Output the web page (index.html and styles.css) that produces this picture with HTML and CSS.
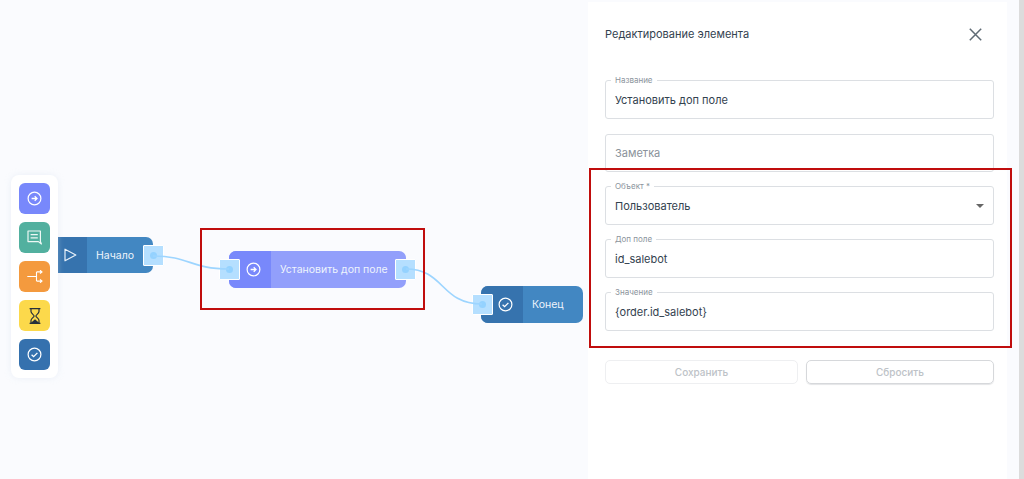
FILE: index.html
```html
<!DOCTYPE html>
<html lang="ru">
<head>
<meta charset="utf-8">
<title>Редактирование элемента</title>
<link rel="stylesheet" href="styles.css">
</head>
<body>
<div class="app">
  <main class="canvas">
    <div class="node node-blue node-start">
      <span class="node-icon"><svg width="13" height="14" viewBox="0 0 13 14" fill="none" stroke="#e8f1fa" stroke-width="1.2" stroke-linejoin="round"><path d="M1 1.200 11.800 7 1 12.800Z"/></svg></span>
      <span class="node-label">Начало</span>
    </div>
    <div class="node node-violet node-set">
      <span class="node-icon"><svg width="15" height="15" viewBox="0 0 15 15" fill="none" stroke="#fff" stroke-width="1.2"><circle cx="7.5" cy="7.5" r="6.4"/><path d="M4.6 7.5h5.2M7.700 5.300l2.300 2.200-2.300 2.200" stroke-width="1.3"/></svg></span>
      <span class="node-label">Установить доп поле</span>
    </div>
    <div class="node node-blue node-end">
      <span class="node-icon"><svg width="15" height="15" viewBox="0 0 15 15" fill="none" stroke="#fff" stroke-width="1.2"><circle cx="7.5" cy="7.5" r="6.4"/><path d="M4.6 7.8l2 1.900 3.800-3.800" stroke-width="1.3"/></svg></span>
      <span class="node-label">Конец</span>
    </div>

    <span class="port port-a"></span>
    <span class="port port-b"></span>
    <span class="port port-c"></span>
    <span class="port port-d"></span>

    <svg class="wires" width="588" height="479" viewBox="0 0 588 479" fill="none">
      <path d="M153 256C190 256 190 269 229 269"/>
      <path d="M406 269C445 269 440 304 482 304"/>
    </svg>

    <aside class="toolbar">
      <div class="tool tool-violet"><svg width="15" height="15" viewBox="0 0 15 15" fill="none" stroke="#fff" stroke-width="1.2"><circle cx="7.5" cy="7.5" r="6.4"/><path d="M4.6 7.5h5.200M7.700 5.300l2.300 2.200-2.300 2.200" stroke-width="1.3"/></svg></div>
      <div class="tool tool-green"><svg width="15" height="15" viewBox="0 0 15 15" fill="none" stroke="#eef8f5" stroke-width="1.2" stroke-linejoin="round"><path d="M1 1h12.400v10.600l1 2.400-3-2.400H1Z"/><path d="M3.600 4.600h7.200M3.600 7.800h7.200"/></svg></div>
      <div class="tool tool-orange"><svg width="16" height="13" viewBox="0 0 16 13" fill="none" stroke="#fff" stroke-width="1.1"><path d="M.3 6.500h9.200M9.500 1.900v9.200M9.500 1.900h5.500M9.500 11.100h5.500M13 .2l2 1.700-2 1.700M13 9.400l2 1.700-2 1.700"/></svg></div>
      <div class="tool tool-yellow"><svg width="12" height="16" viewBox="0 0 12 16" fill="none" stroke="#26303b" stroke-width="1.200"><path d="M.6.700h10.800M.6 15.300h10.800M2 .700v2.800c0 2.200 3.100 3.200 3.100 4.500S2 10.300 2 12.500v2.800M10 .700v2.800C10 5.700 6.900 6.700 6.900 8S10 10.300 10 12.500v2.800"/><path d="M3 14.700 6 12l3 2.700Z" fill="#26303b"/></svg></div>
      <div class="tool tool-blue"><svg width="15" height="15" viewBox="0 0 15 15" fill="none" stroke="#fff" stroke-width="1.2"><circle cx="7.500" cy="7.500" r="6.400"/><path d="M4.600 7.800l2 1.900 3.800-3.800" stroke-width="1.300"/></svg></div>
    </aside>
  </main>

  <section class="panel">
    <header class="panel-head">
      <h1 class="panel-title">Редактирование элемента</h1>
      <svg class="close" width="13" height="13" viewBox="0 0 13 13" fill="none" stroke="#5f6b75" stroke-width="1.500"><path d="M.8.800l11.400 11.400M12.200.800.800 12.200"/></svg>
    </header>
    <form class="form">
      <div class="field"><span class="field-label">Название</span><span class="field-value">Установить доп поле</span></div>
      <div class="field field-note"><span class="field-placeholder">Заметка</span></div>
      <div class="field field-select"><span class="field-label">Объект *</span><span class="field-value">Пользователь</span><span class="caret"></span></div>
      <div class="field field-extra"><span class="field-label">Доп поле</span><span class="field-value">id_salebot</span></div>
      <div class="field field-extra"><span class="field-label">Значение</span><span class="field-value">{order.id_salebot}</span></div>
      <div class="actions">
        <div class="btn btn-save">Сохранить</div>
        <div class="btn btn-reset">Сбросить</div>
      </div>
    </form>
  </section>
  <div class="gutter"></div>
  <div class="scrollbar"></div>

  <div class="mark mark-node"></div>
  <div class="mark mark-form"></div>
</div>
</body>
</html>
```
FILE: styles.css
```css
* { box-sizing: border-box; }
html, body { margin: 0; height: 479px; overflow: hidden; }
body { font-family: Inter, "Noto Sans", sans-serif; background: #fafbfe; color: #33424f; }

.app { position: relative; display: flex; width: 1024px; height: 479px; }
.canvas { position: relative; flex: 0 0 588px; height: 479px; background: #fafbfe; }
.wires { position: absolute; left: 0; top: 0; }
.wires path { stroke: #9dd5ff; stroke-width: 1.7; }

.node { position: absolute; display: flex; overflow: hidden; color: #eef4fc; font-size: 10.500px; font-weight: 400; border-radius: 7px; }
.node-icon { display: flex; align-items: center; justify-content: center; flex: none; height: 100%; }
.node-label { flex: 1; display: flex; align-items: center; }
.node-blue { background: #4287c2; }
.node-blue .node-icon { background: #3673ae; }
.node-violet { background: #929ffb; }
.node-violet .node-icon { background: #7888fb; }

.node-start { left: 58px; top: 237px; width: 95px; height: 36px; border-radius: 0 7px 7px 0; }
.node-start .node-icon { width: 29px; justify-content: flex-start; padding-left: 6px; }
.node-start .node-label { padding-left: 9px; }
.node-set { left: 229px; top: 251px; width: 177px; height: 37px; }
.node-set .node-icon { width: 42px; justify-content: flex-end; padding-right: 10px; }
.node-set .node-label { padding-left: 9px; }
.node-end { left: 481px; top: 286px; width: 102px; height: 37px; }
.node-end .node-icon { width: 42px; justify-content: flex-end; padding-right: 10px; }
.node-end .node-label { padding-left: 9px; }

.port { position: absolute; width: 21px; height: 21px; background: #b5dfff; border: 1px solid #fff; border-radius: 1px; }
.port::after { content: ""; position: absolute; left: 6px; top: 6px; width: 7px; height: 7px; border-radius: 50%; background: #94d2ff; }
.port-a { left: 143px; top: 245px; }
.port-b { left: 219px; top: 259px; }
.port-c { left: 395px; top: 259px; }
.port-d { left: 472px; top: 294px; }

.toolbar { position: absolute; left: 11px; top: 175px; width: 47px; height: 203px; padding: 8px 8px; display: flex; flex-direction: column; gap: 8px; background: #fff; border-radius: 8px; box-shadow: 0 0 6px rgba(210, 220, 235, .35); }
.tool { flex: none; width: 31px; height: 31px; display: flex; align-items: center; justify-content: center; border-radius: 6px; }
.tool-violet { background: #7888fb; }
.tool-green { background: #52b09f; }
.tool-orange { background: #f49a3e; }
.tool-yellow { background: #fcd94b; }
.tool-blue { background: #3571ae; }

.panel { flex: 0 0 419px; margin-top: 2px; height: 477px; padding: 0 13px 0 17px; background: #fff; }
.panel-head { display: flex; align-items: center; justify-content: space-between; height: 64px; padding: 0 12px 0 0; }
.panel-title { margin: 0; font-size: 11px; font-weight: 400; color: #33424f; }
.close { flex: none; }
.form { margin-top: 14px; display: flex; flex-direction: column; gap: 14px; }
.field { position: relative; display: flex; align-items: center; height: 39px; padding: 0 9px; border: 1px solid #dcdfe3; border-radius: 3px; font-size: 11px; }
.field-note { margin-top: 1px; height: 38px; }
.field-label { position: absolute; left: 5px; top: -5px; padding: 0 4px; background: #fff; font-size: 8px; line-height: 9px; color: #8b949c; }
.field-value { color: #33424f; }
.field-placeholder { color: #8a929a; }
.caret { position: absolute; right: 9px; top: 17px; border-style: solid; border-width: 4.500px 4.500px 0; border-color: #666 transparent transparent; }
.actions { margin-top: 15px; display: flex; gap: 8px; }
.btn { display: flex; align-items: center; justify-content: center; height: 24px; border-radius: 5px; font-size: 10px; font-weight: 500; color: #bdc2c7; }
.btn-save { flex: 0 0 193px; border: 1px solid #eeeff1; }
.btn-reset { flex: 1; border: 1px solid #d6d8db; box-shadow: 0 1px 1px #e4e5e7; }

.gutter { flex: 0 0 12px; background: #fafbfe; }
.scrollbar { flex: 1; background: #dcdcdc; }

.mark { position: absolute; border: 2px solid #c00d0d; pointer-events: none; }
.mark-node { left: 200px; top: 228px; width: 225px; height: 82px; }
.mark-form { left: 589px; top: 168px; width: 423px; height: 180px; }
```
